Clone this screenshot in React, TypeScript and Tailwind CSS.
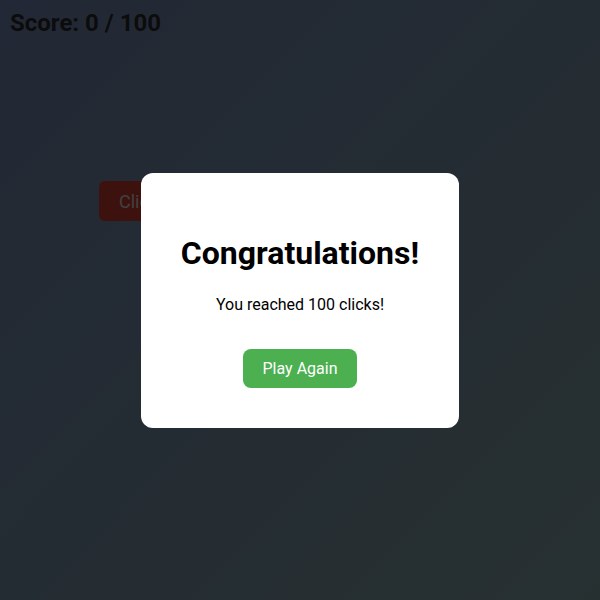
import React from "react";

export default function App() {
  return (
    <div
      className="relative w-[600px] h-[600px] overflow-hidden bg-gradient-to-br from-[#86a0d2] to-[#9cc0c4]"
      style={{ fontFamily: "Roboto, 'Liberation Sans', sans-serif" }}
    >
      <h2 className="absolute left-[10px] top-[9px] text-[24px] leading-[28px] font-bold text-[#333]">
        Score: 0 / 100
      </h2>

      <button className="absolute left-[99px] top-[181px] h-[40px] px-5 rounded-md bg-[#f44336] text-white text-[18px]">
        Click me!
      </button>

      {/* overlay */}
      <div className="absolute inset-0 bg-black/75 flex items-center justify-center">
        <div className="bg-white rounded-xl px-10 pt-10 pb-10 mt-[1px] flex flex-col items-center text-center">
          <h2 className="mt-[22px] text-[32px] leading-[36px] font-bold text-black">
            Congratulations!
          </h2>
          <p className="mt-[22px] text-[16px] leading-6 text-black">You reached 100 clicks!</p>
          <button className="mt-[32px] h-[39px] px-5 rounded-lg bg-[#4caf50] text-white text-[16px]">
            Play Again
          </button>
        </div>
      </div>
    </div>
  );
}
